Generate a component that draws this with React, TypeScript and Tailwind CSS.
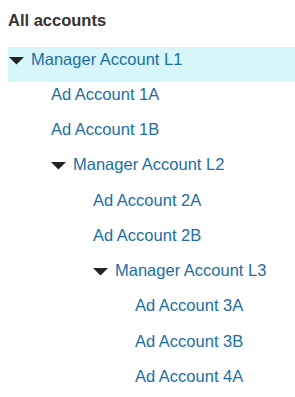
type Node = {
  label: string
  depth: number
  manager?: boolean
  selected?: boolean
}

const rows: Node[] = [
  { label: "Manager Account L1", depth: 0, manager: true, selected: true },
  { label: "Ad Account 1A", depth: 1 },
  { label: "Ad Account 1B", depth: 1 },
  { label: "Manager Account L2", depth: 1, manager: true },
  { label: "Ad Account 2A", depth: 2 },
  { label: "Ad Account 2B", depth: 2 },
  { label: "Manager Account L3", depth: 2, manager: true },
  { label: "Ad Account 3A", depth: 3 },
  { label: "Ad Account 3B", depth: 3 },
  { label: "Ad Account 4A", depth: 3 },
]

const Caret = () => (
  <svg width="15" height="8" viewBox="0 0 15 8" className="shrink-0 mt-[7px] mr-[7px]">
    <polygon points="0,0 15,0 7.5,7.5" fill="#222" />
  </svg>
)

export default function App() {
  return (
    <div
      className="w-[295px] h-[397px] bg-white pl-2 pt-[11px]"
      style={{ fontFamily: '"Liberation Sans", Arial, sans-serif' }}
    >
      {/* Header */}
      <h2 className="text-[16.5px] leading-[19px] font-bold text-[#333] mb-[17px]">All accounts</h2>

      {/* Tree */}
      <ul>
        {rows.map((r) => (
          <li
            key={r.label}
            className={`flex items-start h-[35.25px] pt-[2.5px] ${r.selected ? "bg-[#d6f6f9]" : ""}`}
            style={{ paddingLeft: 1 + r.depth * 42 }}
          >
            {r.manager && <Caret />}
            <span className="text-[16.5px] leading-[19px] text-[#1b6ea5]">{r.label}</span>
          </li>
        ))}
      </ul>
    </div>
  )
}
